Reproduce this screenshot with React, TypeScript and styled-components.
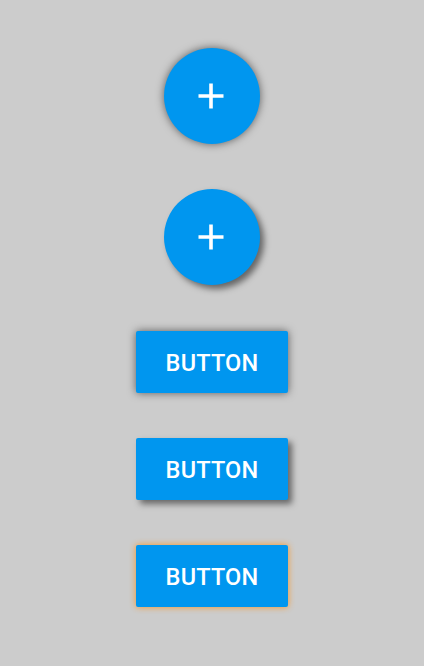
import React from "react";
import styled, { createGlobalStyle, css } from "styled-components";

const Global = createGlobalStyle`
  html, body {
    margin: 0;
    padding: 0;
    background: #cccccc;
  }
  body {
    font-family: Roboto, "Liberation Sans", sans-serif;
  }
`;

const Page = styled.div`
  width: 424px;
  min-height: 666px;
  box-sizing: border-box;
  padding-top: 48px;
  display: flex;
  flex-direction: column;
  align-items: center;
  gap: 45px;
  background: #cccccc;
`;

type Elevation = "glow" | "drop" | "focus";

const shadowFor = (e: Elevation) => {
  switch (e) {
    case "glow":
      return css`box-shadow: 0 0 8px rgba(0, 0, 0, 0.55);`;
    case "drop":
      return css`box-shadow: 4px 4px 6px rgba(0, 0, 0, 0.5);`;
    case "focus":
      return css`box-shadow: 0 0 6px rgba(255, 145, 20, 0.95);`;
  }
};

const Fab = styled.button<{ $elevation: Elevation }>`
  width: 96px;
  height: 96px;
  border-radius: 50%;
  border: none;
  padding: 0;
  margin: 0;
  background: #0096ef;
  display: flex;
  align-items: center;
  justify-content: center;
  ${(p) => shadowFor(p.$elevation)}
`;

const RectButton = styled.button<{ $elevation: Elevation; $first?: boolean }>`
  width: 152px;
  height: 62px;
  border-radius: 2px;
  border: none;
  padding: 1px 0 0;
  margin: ${(p) => (p.$first ? "1px 0 0" : "0")};
  background: #0096ef;
  color: #ffffff;
  font-family: Roboto, "Liberation Sans", sans-serif;
  font-weight: 500;
  font-size: 23.5px;
  letter-spacing: 0.2px;
  display: flex;
  align-items: center;
  justify-content: center;
  ${(p) => shadowFor(p.$elevation)}
`;

const PlusIcon = () => (
  <svg width="26" height="26" viewBox="0 0 26 26" style={{ marginLeft: -2 }}>
    <path d="M0.5 13 H25.5 M13 0.5 V25.5" stroke="#ffffff" strokeWidth="3.6" />
  </svg>
);

export default function App() {
  return (
    <>
      <Global />
      <Page>
        <Fab $elevation="glow">
          <PlusIcon />
        </Fab>
        <Fab $elevation="drop">
          <PlusIcon />
        </Fab>
        <RectButton $elevation="glow" $first>
          BUTTON
        </RectButton>
        <RectButton $elevation="drop">BUTTON</RectButton>
        <RectButton $elevation="focus">BUTTON</RectButton>
      </Page>
    </>
  );
}
